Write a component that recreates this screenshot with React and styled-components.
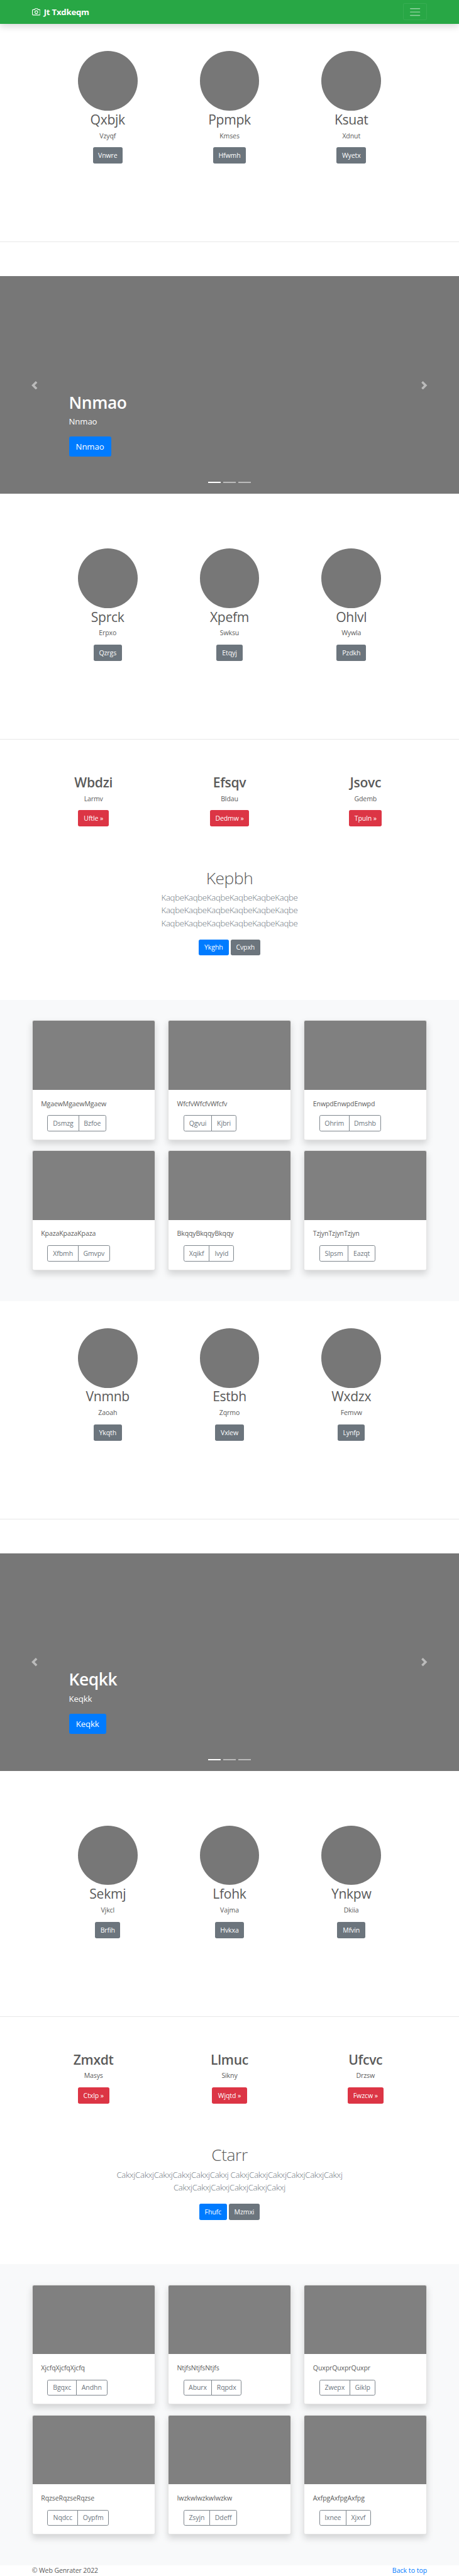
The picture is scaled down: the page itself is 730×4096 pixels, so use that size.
import React from "react";
import styled, { createGlobalStyle } from "styled-components";

/* Every length is in rem; the root size scales a 1080-wide design to 730. */
const px = (n) => `${n / 16}rem`;

const GlobalStyle = createGlobalStyle`
  html { font-size: 10.8216px; }
  *, *::before, *::after { box-sizing: border-box; }
  body {
    margin: 0;
    background: #fff;
    color: #5a5a5a;
    font-family: "Open Sans", "Noto Sans", sans-serif;
    font-size: ${px(15.6)};
    font-weight: 400;
    line-height: ${px(24)};
    letter-spacing: -0.011em;
  }
  h1, h2, p { margin: 0; }
  a { text-decoration: none; }
`;

const COLORS = {
  primary: "#007bff",
  secondary: "#6c757d",
  danger: "#dc3545",
};

/* ---------- shared ---------- */

const Button = styled.a`
  display: flex;
  align-items: center;
  justify-content: center;
  width: ${(p) => px(p.$width)};
  height: ${(p) => px(p.$large ? 48 : 38)};
  border-radius: ${(p) => px(p.$large ? 4.8 : 4)};
  background: ${(p) => COLORS[p.$variant]};
  color: #fff;
  font-size: ${(p) => px(p.$large ? 19.5 : 15.6)};
  white-space: nowrap;
`;

const Divider = styled.hr`
  margin: 0 0 calc(${px(81)} - 1px);
  border: 0;
  border-top: 1px solid rgba(0, 0, 0, 0.09);
`;

/* ---------- navbar ---------- */

const Navbar = styled.header`
  position: relative;
  z-index: 1;
  display: flex;
  align-items: center;
  justify-content: space-between;
  height: ${px(56)};
  padding: 0 ${px(75)};
  background: #28a745;
  box-shadow: 0 ${px(8)} ${px(16)} rgba(0, 0, 0, 0.15);
`;

const Brand = styled.a`
  display: flex;
  align-items: center;
  gap: ${px(8)};
  color: #fff;
  font-size: ${px(19.5)};
  font-weight: 700;
  line-height: ${px(30)};
  letter-spacing: -0.016em;

  svg {
    width: ${px(20)};
    height: ${px(20)};
  }
`;

const Toggler = styled.button`
  display: flex;
  align-items: center;
  justify-content: center;
  width: ${px(56)};
  height: ${px(40)};
  padding: 0;
  border: 1px solid rgba(255, 255, 255, 0.08);
  border-radius: ${px(4)};
  background: transparent;

  svg {
    width: ${px(30)};
    height: ${px(30)};
  }
`;

const CameraIcon = () => (
  <svg viewBox="0 0 24 24" fill="none" stroke="currentColor" strokeWidth="2" strokeLinecap="round" strokeLinejoin="round">
    <path d="M23 19a2 2 0 0 1-2 2H3a2 2 0 0 1-2-2V8a2 2 0 0 1 2-2h4l2-3h6l2 3h4a2 2 0 0 1 2 2z" />
    <circle cx="12" cy="13" r="4" />
  </svg>
);

const MenuIcon = () => (
  <svg viewBox="0 0 30 30" stroke="rgba(255,255,255,0.5)" strokeWidth="2" strokeLinecap="round">
    <path d="M4 7h22M4 15h22M4 23h22" />
  </svg>
);

/* ---------- profiles ---------- */

const ProfileSection = styled.section`
  display: grid;
  grid-template-columns: repeat(3, 1fr);
  padding: ${(p) => px(p.$top)} ${px(110)} ${px(184)};
`;

const Column = styled.div`
  display: flex;
  flex-direction: column;
  align-items: center;
`;

const Avatar = styled.div`
  width: ${px(140)};
  height: ${px(140)};
  border-radius: 50%;
  background: #777;
`;

const ColumnTitle = styled.h2`
  padding-top: ${px(1.2)};
  height: ${px(46.4)};
  font-size: ${px(31.2)};
  font-weight: ${(p) => (p.$strong ? 600 : 400)};
  line-height: ${px(38.4)};
  letter-spacing: -0.014em;
`;

const ColumnText = styled.p`
  padding-top: ${px(0.5)};
  height: ${px(40)};
`;

const Profiles = ({ top, items }) => (
  <ProfileSection $top={top}>
    {items.map(([name, text, action, width]) => (
      <Column key={name}>
        <Avatar />
        <ColumnTitle>{name}</ColumnTitle>
        <ColumnText>{text}</ColumnText>
        <Button href="#" $variant="secondary" $width={width}>{action}</Button>
      </Column>
    ))}
  </ProfileSection>
);

/* ---------- carousel ---------- */

const Slide = styled.section`
  display: grid;
  grid-template-columns: ${px(162)} 1fr ${px(162)};
  height: ${px(512)};
  background: #777;
  color: #fff;
`;

const SlideControl = styled.a`
  display: flex;
  align-items: center;
  justify-content: center;
  color: #fff;
  opacity: 0.5;

  svg {
    width: ${px(20)};
    height: ${px(20)};
  }
`;

const SlideBody = styled.div`
  display: flex;
  flex-direction: column;
  justify-content: flex-end;
`;

const SlideTitle = styled.h1`
  padding-top: ${px(1.5)};
  height: ${px(56)};
  font-size: ${px(39)};
  font-weight: 600;
  line-height: ${px(48)};
  letter-spacing: -0.015em;
`;

const SlideText = styled.p`
  padding-top: ${px(0.7)};
  height: ${px(49.4)};
  font-size: ${px(19.5)};
  line-height: ${px(28)};
`;

const Indicators = styled.div`
  display: flex;
  justify-content: center;
  gap: ${px(6)};
  padding: ${px(58.6)} 0 ${px(26)};
`;

const Indicator = styled.span`
  width: ${px(30)};
  height: ${px(3)};
  background: #fff;
  opacity: ${(p) => (p.$active ? 1 : 0.5)};
`;

const Carousel = ({ text, width }) => (
  <Slide>
    <SlideControl href="#" aria-label="Previous">
      <svg viewBox="0 0 8 8" fill="currentColor">
        <path d="M5.25 0l-4 4 4 4 1.5-1.5-2.5-2.5 2.5-2.5-1.5-1.5z" />
      </svg>
    </SlideControl>
    <SlideBody>
      <SlideTitle>{text}</SlideTitle>
      <SlideText>{text}</SlideText>
      <Button href="#" $variant="primary" $large $width={width}>{text}</Button>
      <Indicators>
        <Indicator $active />
        <Indicator />
        <Indicator />
      </Indicators>
    </SlideBody>
    <SlideControl href="#" aria-label="Next">
      <svg viewBox="0 0 8 8" fill="currentColor">
        <path d="M2.75 0l-1.5 1.5 2.5 2.5-2.5 2.5 1.5 1.5 4-4-4-4z" />
      </svg>
    </SlideControl>
  </Slide>
);

/* ---------- features ---------- */

const FeatureSection = styled.section`
  display: grid;
  grid-template-columns: repeat(3, 1fr);
  padding: 0 ${px(60)} ${px(95.4)};
`;

const Features = ({ items }) => (
  <FeatureSection>
    {items.map(([title, text, action, width]) => (
      <Column key={title}>
        <ColumnTitle $strong>{title}</ColumnTitle>
        <ColumnText>{text}</ColumnText>
        <Button href="#" $variant="danger" $width={width}>{action} »</Button>
      </Column>
    ))}
  </FeatureSection>
);

/* ---------- intro ---------- */

const IntroSection = styled.section`
  display: flex;
  flex-direction: column;
  align-items: center;
  padding-bottom: ${px(104.2)};
  text-align: center;
`;

const IntroTitle = styled.h1`
  padding-top: ${px(1.5)};
  height: ${px(56)};
  font-size: ${px(39)};
  font-weight: 300;
  line-height: ${px(48)};
  letter-spacing: -0.016em;
`;

const Lead = styled.p`
  padding-top: ${px(0.9)};
  margin-bottom: ${px(23.1)};
  color: #6c757d;
  font-size: ${px(19.5)};
  font-weight: 300;
  line-height: ${px(30)};
  letter-spacing: -0.021em;
`;

const LeadLine = styled.span`
  display: block;
  white-space: nowrap;
`;

const ButtonRow = styled.div`
  display: flex;
  gap: ${px(4.6)};
`;

const Intro = ({ title, lines, primary, secondary }) => (
  <IntroSection>
    <IntroTitle>{title}</IntroTitle>
    <Lead>
      {lines.map((line, i) => (
        <LeadLine key={i}>{line}</LeadLine>
      ))}
    </Lead>
    <ButtonRow>
      <Button href="#" $variant="primary" $width={primary[1]}>{primary[0]}</Button>
      <Button href="#" $variant="secondary" $width={secondary[1]}>{secondary[0]}</Button>
    </ButtonRow>
  </IntroSection>
);

/* ---------- album ---------- */

const AlbumSection = styled.section`
  display: grid;
  grid-template-columns: repeat(3, 1fr);
  gap: ${px(24)} ${px(30)};
  height: ${px(708)};
  align-content: start;
  padding: ${px(48)} ${px(75)} 0;
  background: #f8f9fa;
`;

const Card = styled.article`
  height: ${px(282)};
  border: 1px solid rgba(0, 0, 0, 0.11);
  border-radius: ${px(4)};
  background: #fff;
  background-clip: border-box;
  box-shadow: 0 ${px(8)} ${px(16)} rgba(0, 0, 0, 0.15);
`;

const CardImage = styled.div`
  height: ${px(162)};
  border-radius: ${px(3)} ${px(3)} 0 0;
  background: #808080;
`;

const CardBody = styled.div`
  padding: ${px(20.3)} ${px(20)} 0;
`;

const CardText = styled.p`
  height: ${px(39.6)};
`;

const ButtonGroup = styled.div`
  display: flex;
  padding-left: ${px(15)};
`;

const GroupButton = styled.button`
  display: flex;
  align-items: center;
  justify-content: center;
  width: ${(p) => px(p.$width)};
  height: ${px(38)};
  padding: 0;
  border: 1px solid #7f878e;
  border-radius: ${px(4)};
  background: transparent;
  color: #6c757d;
  font: inherit;
  letter-spacing: inherit;

  &:first-child {
    border-top-right-radius: 0;
    border-bottom-right-radius: 0;
  }
  &:last-child {
    margin-left: -1px;
    border-top-left-radius: 0;
    border-bottom-left-radius: 0;
  }
`;

const Album = ({ cards }) => (
  <AlbumSection>
    {cards.map(([word, left, leftWidth, right, rightWidth]) => (
      <Card key={word}>
        <CardImage />
        <CardBody>
          <CardText>{word.repeat(3)}</CardText>
          <ButtonGroup>
            <GroupButton $width={leftWidth}>{left}</GroupButton>
            <GroupButton $width={rightWidth}>{right}</GroupButton>
          </ButtonGroup>
        </CardBody>
      </Card>
    ))}
  </AlbumSection>
);

/* ---------- footer ---------- */

const Footer = styled.footer`
  display: flex;
  justify-content: space-between;
  height: ${px(24)};
  padding: 0 ${px(75)};
`;

const TopLink = styled.a`
  color: #007bff;
  letter-spacing: 0;
`;

/* ---------- content ---------- */

const kaqbe = "Kaqbe".repeat(6);
const cakxj = "Cakxj".repeat(6);

export default function App() {
  return (
    <>
      <GlobalStyle />
      <Navbar>
        <Brand href="#">
          <CameraIcon />
          Jt Txdkeqm
        </Brand>
        <Toggler aria-label="Toggle navigation">
          <MenuIcon />
        </Toggler>
      </Navbar>

      <main>
        <Profiles
          top={64}
          items={[
            ["Qxbjk", "Vzyqf", "Vnwre", 69.6],
            ["Ppmpk", "Kmses", "Hfwmh", 76],
            ["Ksuat", "Xdnut", "Wyetx", 69.6],
          ]}
        />
        <Divider />
        <Carousel text="Nnmao" width={99} />
        <Profiles
          top={128}
          items={[
            ["Sprck", "Erpxo", "Qzrgs", 67],
            ["Xpefm", "Swksu", "Etqyj", 61],
            ["Ohlvl", "Wywla", "Pzdkh", 69],
          ]}
        />
        <Divider />
        <Features
          items={[
            ["Wbdzi", "Larmv", "Uftle", 72.4],
            ["Efsqv", "Bldau", "Dedmw", 92.4],
            ["Jsovc", "Gdemb", "Tpuln", 76.4],
          ]}
        />
        <Intro
          title="Kepbh"
          lines={[kaqbe, kaqbe, kaqbe]}
          primary={["Ykghh", 70.3]}
          secondary={["Cvpxh", 69.7]}
        />
        <Album
          cards={[
            ["Mgaew", "Dsmzg", 74.2, "Bzfoe", 66],
            ["Wfcfv", "Qgvui", 67.6, "Kjbri", 58.2],
            ["Enwpd", "Ohrim", 70.4, "Dmshb", 76.6],
            ["Kpaza", "Xfbmh", 73.2, "Gmvpv", 75.2],
            ["Bkqqy", "Xqikf", 61.8, "Ivyid", 59],
            ["Tzjyn", "Slpsm", 68.3, "Eazqt", 65],
          ]}
        />

        <Profiles
          top={64}
          items={[
            ["Vnmnb", "Zaoah", "Ykqth", 67],
            ["Estbh", "Zqrmo", "Vxlew", 67.6],
            ["Wxdzx", "Femvw", "Lynfp", 64],
          ]}
        />
        <Divider />
        <Carousel text="Keqkk" width={87.4} />
        <Profiles
          top={128}
          items={[
            ["Sekmj", "Vjkcl", "Brfih", 58.6],
            ["Lfohk", "Vajma", "Hvkxa", 67.5],
            ["Ynkpw", "Dkiia", "Mfvin", 66],
          ]}
        />
        <Divider />
        <Features
          items={[
            ["Zmxdt", "Masys", "Ctxlp", 73.8],
            ["Llmuc", "Sikny", "Wjqtd", 82.6],
            ["Ufcvc", "Drzsw", "Fwzcw", 84],
          ]}
        />
        <Intro
          title="Ctarr"
          lines={[`${cakxj} ${cakxj}`, cakxj]}
          primary={["Fhufc", 64.8]}
          secondary={["Mzmxi", 73]}
        />
        <Album
          cards={[
            ["Xjcfq", "Bgqxc", 69, "Andhn", 73.2],
            ["Ntjfs", "Aburx", 67.6, "Rqpdx", 70.4],
            ["Quxpr", "Zwepx", 72.1, "Giklp", 61.8],
            ["Rqzse", "Nqdcc", 72.1, "Oypfm", 74.2],
            ["Iwzkw", "Zsyjn", 62.8, "Ddeff", 64.9],
            ["Axfpg", "Ixnee", 63.2, "Xjxvf", 59.7],
          ]}
        />
      </main>

      <Footer>
        <span>© Web Genrater 2022</span>
        <TopLink href="#">Back to top</TopLink>
      </Footer>
    </>
  );
}
